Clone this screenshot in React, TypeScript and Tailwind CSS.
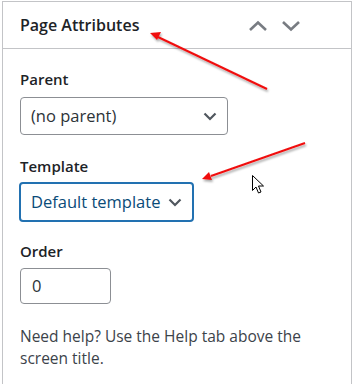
import React from "react";

const Chevron = ({ up, className }: { up?: boolean; className?: string }) => (
  <svg width="20" height="12" viewBox="0 0 20 12" className={className}>
    <path
      d={up ? "M2 10 L10 2.5 L18 10" : "M2 2 L10 9.5 L18 2"}
      fill="none"
      stroke="#787c82"
      strokeWidth="2.6"
    />
  </svg>
);

const SmallChevron = ({ color = "#50575e" }: { color?: string }) => (
  <svg width="14" height="9" viewBox="0 0 14 9">
    <path d="M1.5 1.5 L7 7 L12.5 1.5" fill="none" stroke={color} strokeWidth="2.2" />
  </svg>
);

export default function App() {
  return (
    <div
      className="relative w-[352px] h-[384px] overflow-hidden bg-white pt-[1px] pl-[2px]"
      style={{ fontFamily: '"Open Sans", "Noto Sans", sans-serif' }}
    >
      <div className="w-[350px] h-[400px] border border-[#c3c4c7] border-b-0 bg-white">
        <div className="h-[47px] border-b border-[#c3c4c7] flex items-center pl-[17px]">
          <h2 className="text-[16px] font-semibold text-[#1d2327]">Page Attributes</h2>
          <div className="ml-auto mr-[50px] flex items-center gap-[13px] mt-[1px]">
            <Chevron up />
            <Chevron />
          </div>
        </div>
        <div className="pl-[17px] pt-[20px]">
          <div className="text-[15px] font-semibold text-[#1d2327] leading-[20px]">Parent</div>
          <div className="mt-[8px] w-[208px] h-[38px] border border-[#8c8f94] rounded-[4px] flex items-center pl-[10px] pr-[10px] text-[16.5px] text-[#2c3338]">
            <span>(no parent)</span>
            <span className="ml-auto flex"><SmallChevron /></span>
          </div>
          <div className="mt-[21px] text-[15px] font-semibold text-[#1d2327] leading-[20px]">Template</div>
          <div className="mt-[6px] -ml-[1px] w-[175px] h-[40px] border-2 border-[#2271b1] rounded-[4px] flex items-center pl-[10px] pr-[10px] text-[16.5px] text-[#0a4b78]">
            <span>Default template</span>
            <span className="ml-auto flex"><SmallChevron /></span>
          </div>
          <div className="mt-[19px] text-[15px] font-semibold text-[#1d2327] leading-[20px]">Order</div>
          <div className="mt-[7px] w-[91px] h-[36px] border border-[#8c8f94] rounded-[4px] flex items-center pl-[11px] text-[16.5px] text-[#2c3338]">
            0
          </div>
          <p className="mt-[21px] text-[15.5px] leading-[22px] text-[#3c434a] w-[310px]">
            Need help? Use the Help tab above the screen title.
          </p>
        </div>
      </div>

      <svg className="absolute left-0 top-0 pointer-events-none" width="352" height="384">
        <defs>
          <filter id="sh" x="-20%" y="-20%" width="140%" height="140%">
            <feDropShadow dx="1" dy="2" stdDeviation="1.2" floodColor="#000" floodOpacity="0.35" />
          </filter>
        </defs>
        <g filter="url(#sh)">
          <line x1="267" y1="89" x2="158" y2="37" stroke="#f01010" strokeWidth="2" />
          <polygon points="150,33 161,32 157,40" fill="#f01010" />
          <line x1="305" y1="143" x2="211" y2="176" stroke="#f01010" strokeWidth="2" />
          <polygon points="202,179 209,172 212,180" fill="#f01010" />
        </g>
        <path
          d="M252.5 175.5 L252.5 190.5 L256 187 L258.5 193 L261 192 L258.5 186 L263.5 186 Z"
          fill="#fff"
          stroke="#000"
          strokeWidth="1"
        />
      </svg>
    </div>
  );
}
